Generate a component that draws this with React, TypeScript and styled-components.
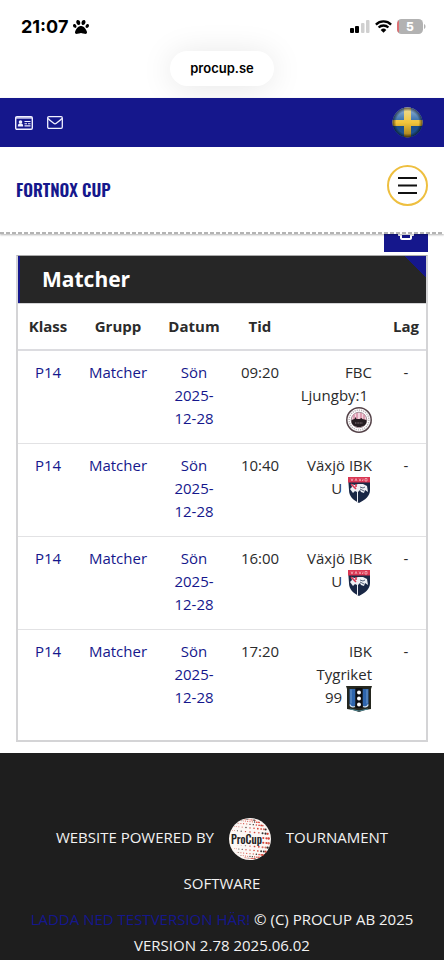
import React from "react";
import styled, { createGlobalStyle } from "styled-components";
import { FaPaw, FaPrint } from "react-icons/fa6";

const navy = "#15178c";
const sans = '"Open Sans", "Noto Sans", sans-serif';

const GlobalStyle = createGlobalStyle`
  *, *::before, *::after { box-sizing: border-box; }
  body { margin: 0; background: #fff; color: #2b2b2b; font: 15px/23px ${sans}; }
  a { color: ${navy}; text-decoration: none; }
`;

const Page = styled.div`
  min-height: 100vh;
  display: flex;
  flex-direction: column;
`;

const BrowserChrome = styled.div`
  height: 98px;
  overflow: hidden;
  font-family: Inter, sans-serif;
  color: #000;
`;

const StatusBar = styled.div`
  display: flex;
  align-items: center;
  justify-content: space-between;
  height: 51px;
  padding: 2px 18px 0 21px;
`;

const Clock = styled.div`
  display: flex;
  align-items: center;
  gap: 5px;
  font-size: 18px;
  font-weight: 700;
`;

const Indicators = styled.div`
  display: flex;
  align-items: center;
  gap: 5px;
`;

const AddressPill = styled.div`
  width: fit-content;
  margin: 0 auto;
  padding: 0 20px;
  border-radius: 18px;
  background: #fff;
  box-shadow: 0 2px 32px rgba(0, 0, 0, 0.1);
  font-size: 13px;
  font-weight: 600;
  line-height: 35px;
`;

const SiteHeader = styled.header`
  position: relative;
  z-index: 1;
  background: #fff;
  box-shadow: 0 1px 2px rgba(0, 0, 0, 0.3);
  &::after {
    content: "";
    display: block;
    height: 2px;
    background: repeating-linear-gradient(90deg, #b4b4b4 0 4px, #fff 4px 6px);
  }
`;

const TopBar = styled.div`
  display: flex;
  align-items: center;
  justify-content: space-between;
  height: 49px;
  padding: 0 21px 0 15px;
  background: ${navy};
`;

const TopLinks = styled.nav`
  display: flex;
  gap: 14px;
  a { display: flex; align-items: center; color: #f0f0ff; }
`;

const PlainButton = styled.button`
  display: flex;
  padding: 0;
  border: 0;
  background: none;
  cursor: pointer;
`;

const BrandBar = styled.div`
  display: flex;
  align-items: center;
  justify-content: space-between;
  height: 85px;
  padding: 0 16px 8px;
`;

const Brand = styled.a`
  padding-top: 8px;
  font: 600 17px/28px Oswald, "Roboto Condensed", sans-serif;
`;

const MenuButton = styled(PlainButton)`
  align-items: center;
  justify-content: center;
  width: 41px;
  height: 41px;
  border: 2px solid #eebf3f;
  border-radius: 50%;
  color: #111;
`;

const Main = styled.main`
  display: flex;
  flex-direction: column;
  align-items: flex-end;
  gap: 3px;
  margin-top: -18px;
  padding: 0 16px 11px;
`;

const PrintButton = styled(PlainButton)`
  align-items: center;
  justify-content: center;
  width: 44px;
  height: 36px;
  padding-bottom: 4px;
  background: ${navy};
  color: #fff;
`;

const Panel = styled.section`
  width: 100%;
  padding-bottom: 17px;
  border: 2px solid #d4d4d6;
  border-top: 1px solid #aaa;
`;

const PanelTitle = styled.h2`
  margin: 0;
  padding-left: 22px;
  border-left: 2px solid ${navy};
  background: linear-gradient(225deg, ${navy} 15px, #262626 15px);
  color: #fff;
  font-size: 21px;
  font-weight: 700;
  line-height: 47px;
`;

const Table = styled.table`
  width: 100%;
  table-layout: fixed;
  border-collapse: separate;
  border-spacing: 0;
  text-align: center;
`;

const Col = styled.col<{ $share: number }>`
  width: ${(p) => p.$share * 100}%;
`;

const HeadCell = styled.th`
  padding: 11px 0;
  border-top: 1px solid #d4d4d6;
  border-bottom: 2px solid #dcdce0;
  font-weight: 700;
`;

const Cell = styled.td<{ $team?: boolean }>`
  height: 93px;
  padding: ${(p) => (p.$team ? "10px 14px 0 8px" : "10px 8px 0")};
  vertical-align: top;
  text-align: ${(p) => (p.$team ? "right" : "center")};
  border-bottom: 1px solid #e2e2e4;
  tr:last-child & { border-bottom: 0; }
  svg { vertical-align: middle; }
`;

const Footer = styled.footer`
  flex: 1;
  padding: 61px 24px 0;
  background: #1e1e1e;
  color: #f2f2f2;
  text-align: center;
  text-transform: uppercase;
  p { margin: 0; }
`;

const Powered = styled.p`
  line-height: 46px;
  svg { margin: 0 11px; vertical-align: middle; }
`;

const Legal = styled.p`
  line-height: 26px;
`;

const LogoText = styled.text`
  font: 500 11px Oswald, "Roboto Condensed", sans-serif;
  fill: #222;
  text-transform: none;
`;

const Signal = () => (
  <svg width="20" height="13" viewBox="0 0 20 13" aria-hidden="true">
    <rect x="0" y="8" width="4" height="5" rx="1" />
    <rect x="5" y="6" width="4" height="7" rx="1" />
    <rect x="11" y="3" width="3.5" height="10" rx="1" fill="#d0d0d0" />
    <rect x="16" y="0" width="3.5" height="13" rx="1" fill="#d0d0d0" />
  </svg>
);

const Wifi = () => (
  <svg width="17" height="13" viewBox="0 0 17 13" fill="none" stroke="#000" strokeWidth="2.3" aria-hidden="true">
    <path d="M.9 4.6a10.8 10.8 0 0 1 15.2 0M3.6 7.5a7 7 0 0 1 9.8 0" />
    <path d="M5.7 9.9a4 4 0 0 1 5.6 0L8.5 12.8z" fill="#000" stroke="none" />
  </svg>
);

const Battery = () => (
  <svg width="29" height="15" viewBox="0 0 29 15" aria-label="5%">
    <rect width="26" height="15" rx="4.5" fill="#b2b2b2" />
    <path d="M2 1.2v12.6A4.5 4.5 0 0 1 0 10.5v-6A4.5 4.5 0 0 1 2 1.2z" fill="#dd6f72" />
    <path d="M27 5c2 .8 2 4.2 0 5z" fill="#b2b2b2" />
    <text x="13" y="12" textAnchor="middle" fill="#fff" fontFamily="Inter, sans-serif" fontSize="12" fontWeight="800">5</text>
  </svg>
);

const ContactCard = () => (
  <svg width="18" height="14" viewBox="0 0 18 14" aria-hidden="true">
    <rect x=".7" y=".7" width="16.6" height="12.6" rx="1.2" fill="none" stroke="currentColor" strokeWidth="1.4" />
    <path d="M1 1h16v2H1z" fill="currentColor" fillOpacity=".6" />
    <circle cx="5.5" cy="6" r="1.8" fill="currentColor" />
    <path d="M2.8 10.5c0-2 .8-3 1.7-3h2c.9 0 1.7 1 1.7 3z" fill="currentColor" />
    <path d="M9.5 5.5h6M9.5 7.7h2.500M13 7.7h2.500M9.5 9.9h6" stroke="currentColor" strokeWidth="1.1" />
  </svg>
);

const Envelope = () => (
  <svg width="16" height="13" viewBox="0 0 16 13" fill="none" stroke="currentColor" strokeWidth="1.3" aria-hidden="true">
    <rect x=".7" y=".7" width="14.6" height="11.6" rx="1.2" />
    <path d="M1 2.5c2 2 4 3.5 5.7 4.8q1.3 1 2.6 0C11 6 13 4.5 15 2.5" />
  </svg>
);

const SwedishFlag = () => (
  <svg width="31" height="31" viewBox="0 0 31 31" aria-hidden="true">
    <defs>
      <clipPath id="flagClip"><circle cx="15.5" cy="15.5" r="15" /></clipPath>
      <linearGradient id="flagBlue" x2="0" y2="1">
        <stop stopColor="#9bbadb" /><stop offset=".48" stopColor="#326ba8" />
        <stop offset=".55" stopColor="#174a88" /><stop offset="1" stopColor="#245a97" />
      </linearGradient>
      <linearGradient id="flagGold" x2="0" y2="1">
        <stop stopColor="#e9dca0" /><stop offset=".5" stopColor="#f2c53b" /><stop offset="1" stopColor="#97751c" />
      </linearGradient>
      <radialGradient id="flagShade">
        <stop offset=".75" stopColor="#000" stopOpacity="0" /><stop offset="1" stopColor="#000" stopOpacity=".6" />
      </radialGradient>
    </defs>
    <g clipPath="url(#flagClip)">
      <path fill="url(#flagBlue)" d="M0 0h31v31H0z" />
      <path fill="url(#flagGold)" d="M12 0h7v13h12v6H19v12h-7V19H0v-6h12z" />
      <circle cx="15.5" cy="15.5" r="15" fill="url(#flagShade)" />
    </g>
  </svg>
);

const MenuIcon = () => (
  <svg width="19" height="17" viewBox="0 0 19 17" stroke="currentColor" strokeWidth="2" aria-hidden="true">
    <path d="M0 1h19M0 8.5h19M0 16h19" />
  </svg>
);

const LjungbyCrest = () => (
  <svg width="26" height="26" viewBox="0 0 26 26" aria-hidden="true">
    <circle cx="13" cy="13" r="12.2" fill="#fff" stroke="#554349" strokeWidth="1.5" />
    <circle cx="13" cy="13" r="9.9" fill="none" stroke="#b8afb3" strokeWidth="1.4" strokeDasharray="1.2 1" />
    <circle cx="13" cy="13" r="7.8" fill="#f3d4de" stroke="#6b5860" strokeWidth=".6" />
    <path d="M8 7.5v6M11 6v7M15 6v7M18 7.500v6" stroke="#d68ca4" strokeWidth="1.5" />
    <path d="M5.5 14.500v-1.500l3-1 1-2 1 2h3l2-1 1 1 4 1v1.500c0 3-3 5.500-7.500 5.500S5.500 17.500 5.500 14.500z" fill="#251d21" />
    <path d="M9 16h8" stroke="#8c7c83" strokeDasharray="1 .6" />
  </svg>
);

const VaxjoCrest = () => (
  <svg width="26" height="26" viewBox="0 0 26 26" aria-hidden="true">
    <path d="M2 0h22v13c0 6-5 10-11 13C7 23 3 19 3 13z" fill="#192745" />
    <path d="M2 0h22v5.5H2z" fill="#d93653" />
    <path d="M5 1.5l1 2.5 1-2.5M9 4l1-2.5L11 4M13 1.5L15 4M15 1.5L13 4M17 1.5v2h-1M19 1.5h2v2.5h-2z" fill="none" stroke="#f4b1bd" strokeWidth=".8" />
    <path d="M5 7l4 1 3-1 5 0 4 2 1 6-3-2-1 3-3-1-1-2-2 2v10h-1V15l-2-1-2 2-3-4 2-2z" fill="#eef0f5" />
    <path d="M5 7l5 5M10 7v3" stroke="#d93653" strokeWidth="1.6" />
    <path d="M14 10l3 1 2-1M14 12l4 2" stroke="#526078" fill="none" />
  </svg>
);

const TygriketCrest = () => (
  <svg width="26" height="26" viewBox="0 0 26 26" aria-hidden="true">
    <path d="M0 0h26l-1 3v20l-6 1-6 2-6-2-6-1V3z" fill="#25271f" />
    <path d="M3.5 3h6v15c0 4-6 3-6 0zM16.5 3h6v15c0 3-6 4-6 0z" fill="#2e65ad" />
    <path d="M5 3.5v14M21 3.5v14" stroke="#719bca" />
    <path d="M4 18.5c0 2 3 3 5 2M22 18.5c0 2-3 3-5 2" fill="none" stroke="#d4e4f5" strokeWidth="1.3" />
    <path d="M9.5 2h7v20h-7z" fill="#0c0d10" />
    <path d="M4 23l9 2 9-2" fill="none" stroke="#4e8694" />
    <g fill="#fff"><circle cx="13" cy="6.5" r="2" /><circle cx="13" cy="12.5" r="2" /><circle cx="13" cy="18.5" r="2" /></g>
  </svg>
);

const globeDots = Array.from({ length: 12 }, (_, row) => {
  const lat = ((row - 5.5) * 13.5 * Math.PI) / 180;
  return Array.from({ length: 11 }, (_, col) => {
    const lon = ((col - 5) * 14 * Math.PI) / 180;
    return {
      x: 21 + 20 * Math.cos(lat) * Math.sin(lon),
      y: 21 + 20 * Math.sin(lat) + 2 * Math.cos(lat) * Math.sin(lon),
      r: 0.4 + 0.8 * Math.cos(lat) * (col / 10),
      color: ["#d44237", "#d44237", "#37302f", "#d8695c"][(row * 3 + col * 2 + (col % 3)) % 4],
    };
  });
}).flat();

const ProCupLogo = () => (
  <svg width="42" height="42" viewBox="0 0 42 42" role="img" aria-label="ProCup">
    <circle cx="21" cy="21" r="21" fill="#fcf7f4" />
    {globeDots.map((d, i) => (
      <circle key={i} cx={d.x} cy={d.y} r={d.r} fill={d.color} />
    ))}
    <path d="M2 15.5h29v12H2z" fill="#fcf7f4" />
    <LogoText x="2" y="26">ProCup</LogoText>
  </svg>
);

const matches = [
  { time: "09:20", team: "FBC Ljungby:1\u00a0", Crest: LjungbyCrest },
  { time: "10:40", team: "Växjö IBK U", Crest: VaxjoCrest },
  { time: "16:00", team: "Växjö IBK U", Crest: VaxjoCrest },
  { time: "17:20", team: "IBK Tygriket 99", Crest: TygriketCrest },
];

const columns = [30, 40, 36, 30, 48, 20];
const columnTotal = columns.reduce((sum, n) => sum + n, 0);

export default function App() {
  return (
    <Page>
      <GlobalStyle />
      <BrowserChrome>
        <StatusBar>
          <Clock>21:07 <FaPaw size={16} /></Clock>
          <Indicators><Signal /><Wifi /><Battery /></Indicators>
        </StatusBar>
        <AddressPill>procup.se</AddressPill>
      </BrowserChrome>
      <SiteHeader>
        <TopBar>
          <TopLinks>
            <a href="#contact" aria-label="Kontakt"><ContactCard /></a>
            <a href="#mail" aria-label="E-post"><Envelope /></a>
          </TopLinks>
          <PlainButton type="button" aria-label="Svenska"><SwedishFlag /></PlainButton>
        </TopBar>
        <BrandBar>
          <Brand href="#home">FORTNOX CUP</Brand>
          <MenuButton type="button" aria-label="Meny"><MenuIcon /></MenuButton>
        </BrandBar>
      </SiteHeader>
      <Main>
        <PrintButton type="button" aria-label="Skriv ut"><FaPrint size={16} /></PrintButton>
        <Panel>
          <PanelTitle>Matcher</PanelTitle>
          <Table>
            <colgroup>
              {columns.map((n, i) => <Col key={i} $share={n / columnTotal} />)}
            </colgroup>
            <thead>
              <tr>
                <HeadCell>Klass</HeadCell>
                <HeadCell>Grupp</HeadCell>
                <HeadCell>Datum</HeadCell>
                <HeadCell>Tid</HeadCell>
                <HeadCell />
                <HeadCell>Lag</HeadCell>
              </tr>
            </thead>
            <tbody>
              {matches.map(({ time, team, Crest }) => (
                <tr key={time}>
                  <Cell><a href="#klass">P14</a></Cell>
                  <Cell><a href="#grupp">Matcher</a></Cell>
                  <Cell><a href="#datum">Sön 2025-12-28</a></Cell>
                  <Cell>{time}</Cell>
                  <Cell $team>{team} <Crest /></Cell>
                  <Cell>-</Cell>
                </tr>
              ))}
            </tbody>
          </Table>
        </Panel>
      </Main>
      <Footer>
        <Powered>Website powered by <ProCupLogo /> Tournament Software</Powered>
        <Legal><a href="#test">Ladda ned testversion här!</a> © (C) ProCup AB 2025 Version 2.78 2025.06.02</Legal>
      </Footer>
    </Page>
  );
}
